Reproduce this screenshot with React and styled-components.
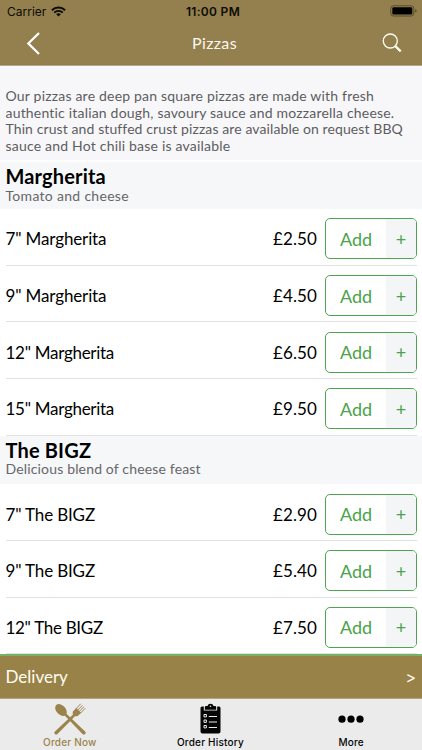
import React from 'react';
import styled, { createGlobalStyle } from 'styled-components';

const GlobalStyle = createGlobalStyle`
  * { box-sizing: border-box; }
  body { margin: 0; background: #fff; }
`;

const Screen = styled.div`
  width: 422px;
  height: 750px;
  overflow: hidden;
  display: flex;
  flex-direction: column;
  background: #fff;
  font-family: Lato, "Liberation Sans", sans-serif;
  color: #000;
  white-space: nowrap;
`;

const Header = styled.header`
  height: 66px;
  flex: none;
  background: #93804e;
  border-bottom: 1px solid #b5a88a;
`;

const StatusBar = styled.div`
  height: 22px;
  display: grid;
  grid-template-columns: 1fr auto 1fr;
  align-items: center;
  padding: 0 4px 0 7px;
  font-family: Inter, sans-serif;
  font-size: 12px;
  color: #0d0b06;
`;

const Carrier = styled.div`
  display: flex;
  align-items: center;
  gap: 5px;
`;

const Clock = styled.div`
  font-weight: 600;
  letter-spacing: 0.3px;
  padding-left: 1px;
`;

const Battery = styled.svg`
  justify-self: end;
`;

const NavBar = styled.div`
  height: 43px;
  display: grid;
  grid-template-columns: 1fr auto 1fr;
  align-items: center;
  padding: 0 20px 0 26px;
`;

const Title = styled.h1`
  margin: 0;
  padding: 0 2px 3px 3px;
  font-size: 16px;
  font-weight: 400;
  letter-spacing: 0.37px;
  color: #fbf8ef;
`;

const SearchIcon = styled.svg`
  justify-self: end;
  margin-bottom: 1px;
`;

const Description = styled.div`
  height: 96px;
  flex: none;
  padding: 22px 5.5px 0;
  background: #f7f7f9;
  border-bottom: 2px solid #fdfdfe;
  font-size: 14px;
  line-height: 16.7px;
  color: #5d5d5f;
`;

const Line = styled.div`
  letter-spacing: ${(p) => p.$track}px;
`;

const Menu = styled.main`
  height: 492px;
  flex: none;
  overflow: hidden;
`;

const SectionHead = styled.div`
  height: ${(p) => p.$height}px;
  padding: 4px 5.5px 0;
  background: #f6f7f9;
`;

const SectionTitle = styled.h2`
  margin: 0;
  font-size: 20px;
  line-height: 20.6px;
  font-weight: 700;
  letter-spacing: 0.16px;
`;

const SectionNote = styled.div`
  font-size: 14px;
  line-height: 17px;
  letter-spacing: ${(p) => p.$track}px;
  color: #66666a;
`;

const Item = styled.div`
  height: 56.7px;
  margin-left: 5.5px;
  margin-right: 5px;
  padding-top: 4px;
  display: flex;
  align-items: center;
  border-bottom: 1px solid #e2e2e4;
  font-size: 17px;
`;

const ItemName = styled.div`
  flex: 1;
  letter-spacing: ${(p) => p.$track}px;
`;

const Price = styled.div`
  margin-right: 8px;
  letter-spacing: 0.1px;
`;

const AddButton = styled.button`
  width: 92px;
  height: 41px;
  padding: 0;
  display: flex;
  overflow: hidden;
  border: 1px solid #4fa450;
  border-radius: 5px;
  background: #fff;
  color: #4ba34b;
  font-family: inherit;
  font-size: 18px;
`;

const AddLabel = styled.span`
  flex: 1;
  align-self: center;
  text-align: center;
`;

const PlusCell = styled.span`
  width: 30px;
  align-self: stretch;
  display: flex;
  align-items: center;
  justify-content: center;
  background: #f4f5f7;
`;

const DeliveryBar = styled.div`
  height: 45px;
  flex: none;
  display: flex;
  align-items: center;
  justify-content: space-between;
  padding: 0 6px 1px 5.5px;
  border-top: 2px solid #74b266;
  border-bottom: 1px solid #b5a57c;
  background: #988248;
  color: #fffdf3;
  font-size: 17px;
`;

const Chevron = styled.span`
  padding-top: 1px;
  font-family: Inter, sans-serif;
  font-size: 16px;
`;

const Tabs = styled.nav`
  flex: 1;
  display: grid;
  grid-template-columns: repeat(3, 1fr);
  background: #ebebeb;
`;

const Tab = styled.div`
  display: flex;
  flex-direction: column;
  align-items: center;
  padding-top: 4px;
  padding-right: 1px;
  font-family: Inter, sans-serif;
  font-size: 10px;
  font-weight: 500;
  line-height: 13px;
  letter-spacing: 0.2px;
  color: ${(p) => (p.$active ? '#9b844c' : '#060606')};

  svg { margin-bottom: 1px; }
`;

const WifiGlyph = () => (
  <svg width="15" height="11" viewBox="0 0 15 11" fill="none" stroke="#0d0b06" strokeWidth="1.9">
    <path d="M.9 4.2a9.4 9.4 0 0 1 13.2 0M3.2 6.6a6.1 6.1 0 0 1 8.6 0" />
    <path d="M7.5 10.6 5.2 8.3a3.3 3.3 0 0 1 4.6 0z" fill="#0d0b06" stroke="none" />
  </svg>
);

const CutleryGlyph = () => (
  <svg width="32" height="32" viewBox="0 0 34 34" fill="#9b844c">
    <ellipse cx="7.4" cy="7.4" rx="4.9" ry="7.3" transform="rotate(-43 7.4 7.4)" />
    <path d="M10.6 12.4 12.4 10.6 33 30.2a1.9 1.9 0 0 1-2.7 2.7z" />
    <path d="M22 10.6 23.8 12.4 3.7 32.9a1.9 1.9 0 0 1-2.7-2.7z" />
    <path d="M20.4 8.8c-1 2-.6 3.2.5 4.3s2.6 1.4 4.6.4l3.3-3.2-5.2-4.9z" />
    <path d="M22.8 6.8 28.4.8M24.6 8.2 30.3 2.4M26.2 9.6 31.9 3.9M27.7 11.2 33.3 5.5" stroke="#9b844c" strokeWidth="1" />
  </svg>
);

const ClipboardGlyph = () => (
  <svg width="21" height="32" viewBox="0 0 21 32">
    <path d="M2 3.5H3.8V7.5H17.2V3.5H19Q20.5 3.5 20.5 5V28.5Q20.5 30.5 18.5 30.5H2.5Q.5 30.5.5 28.5V5Q.5 3.5 2 3.5Z" fill="#050505" />
    <path d="M4.8 6.7V4.2Q4.8 3.1 6 3.1H7.5Q8 .8 10.5.8T13.5 3.1H15Q16.2 3.1 16.2 4.2V6.7Z" fill="#050505" />
    <circle cx="10.5" cy="3.2" r=".8" fill="#ebebeb" />
    <g fill="none" stroke="#ebebeb" strokeWidth="1">
      <path d="M4 11.5h2.4v2.4H4zM4 17h2.4v2.4H4zM4 22.5h2.4v2.4H4zM8.8 13.5h8.2M8.8 19h8.2M8.8 24.5h8.2" />
    </g>
  </svg>
);

const DotsGlyph = () => (
  <svg width="26" height="32" viewBox="0 0 26 32" fill="#000">
    <circle cx="4" cy="16.2" r="3.6" />
    <circle cx="13" cy="16.2" r="3.6" />
    <circle cx="22" cy="16.2" r="3.6" />
  </svg>
);

const description = [
  ['Our pizzas are deep pan square pizzas are made with fresh', 0.2],
  ['authentic italian dough, savoury sauce and mozzarella cheese.', 0.19],
  ['Thin crust and stuffed crust pizzas are available on request BBQ', 0.1],
  ['sauce and Hot chili base is available', 0.2],
];

const sections = [
  {
    title: 'Margherita', note: 'Tomato and cheese', track: 0.3, height: 47, itemTrack: -0.13,
    items: [['7" Margherita', '£2.50'], ['9" Margherita', '£4.50'], ['12" Margherita', '£6.50'], ['15" Margherita', '£9.50']],
  },
  {
    title: 'The BIGZ', note: 'Delicious blend of cheese feast', track: 0.16, height: 48.5, itemTrack: -0.15,
    items: [['7" The BIGZ', '£2.90'], ['9" The BIGZ', '£5.40'], ['12" The BIGZ', '£7.50']],
  },
];

export default function App() {
  return (
    <Screen>
      <GlobalStyle />
      <Header>
        <StatusBar>
          <Carrier>Carrier <WifiGlyph /></Carrier>
          <Clock>11:00 PM</Clock>
          <Battery width="28" height="12" viewBox="0 0 28 12">
            <rect x=".8" y=".8" width="23" height="10.2" rx="2.6" fill="none" stroke="#574b2d" />
            <rect x="2.3" y="2.3" width="20" height="7.2" rx="1.3" fill="#000" />
            <path d="M25.2 4.2q1.5.4 1.5 1.7t-1.5 1.7z" fill="#574b2d" />
          </Battery>
        </StatusBar>
        <NavBar>
          <svg width="15" height="24" viewBox="0 0 15 24" fill="none" stroke="#fff" strokeWidth="2.2">
            <path d="M13 1 2.3 11.4 13 22" />
          </svg>
          <Title>Pizzas</Title>
          <SearchIcon width="20" height="20" viewBox="0 0 20 20" fill="none" stroke="#fffdf0">
            <circle cx="8.3" cy="8" r="7" strokeWidth="1.3" />
            <path d="M13.2 13 18.7 18.3" strokeWidth="2.4" />
          </SearchIcon>
        </NavBar>
      </Header>
      <Description>
        {description.map(([text, track]) => <Line key={text} $track={track}>{text}</Line>)}
      </Description>
      <Menu>
        {sections.map((s) => (
          <React.Fragment key={s.title}>
            <SectionHead $height={s.height}>
              <SectionTitle>{s.title}</SectionTitle>
              <SectionNote $track={s.track}>{s.note}</SectionNote>
            </SectionHead>
            {s.items.map(([name, price]) => (
              <Item key={name}>
                <ItemName $track={name.startsWith('1') ? s.itemTrack - 0.15 : s.itemTrack}>{name}</ItemName>
                <Price>{price}</Price>
                <AddButton><AddLabel>Add</AddLabel><PlusCell>+</PlusCell></AddButton>
              </Item>
            ))}
          </React.Fragment>
        ))}
      </Menu>
      <DeliveryBar><span>Delivery</span><Chevron>&gt;</Chevron></DeliveryBar>
      <Tabs>
        <Tab $active><CutleryGlyph />Order Now</Tab>
        <Tab><ClipboardGlyph />Order History</Tab>
        <Tab><DotsGlyph />More</Tab>
      </Tabs>
    </Screen>
  );
}
